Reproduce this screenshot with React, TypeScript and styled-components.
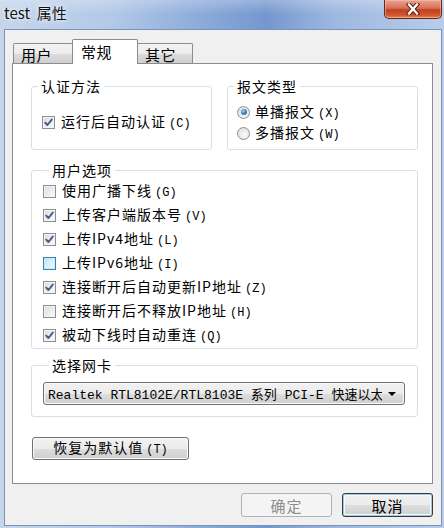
import { ReactElement, ReactNode } from 'react';

import styled, { createGlobalStyle, css } from 'styled-components';

const GlobalStyle = createGlobalStyle`
  html, body {
    margin: 0;
    padding: 0;
  }

  body {
    width: 444px;
    height: 528px;
    overflow: hidden;
    background: #b7cde9;
    font-family: "Noto Sans CJK SC", "Liberation Sans", sans-serif;
    color: #000;
  }

  * {
    box-sizing: border-box;
  }
`;

interface IOption {
  label: string;
  hotkey: string;
  checked?: boolean;
  hover?: boolean;
}

const userOptions: IOption[] = [
  { label: '使用广播下线', hotkey: 'G' },
  { label: '上传客户端版本号', hotkey: 'V', checked: true },
  { label: '上传IPv4地址', hotkey: 'L', checked: true },
  { label: '上传IPv6地址', hotkey: 'I', hover: true },
  { label: '连接断开后自动更新IP地址', hotkey: 'Z', checked: true },
  { label: '连接断开后不释放IP地址', hotkey: 'H' },
  { label: '被动下线时自动重连', hotkey: 'Q', checked: true },
];

function CheckBox({ checked, hover }: { checked?: boolean; hover?: boolean }): ReactElement {
  return (
    <Box $hover={hover}>
      {checked && (
        <svg width="11" height="11" viewBox="0 0 11 11">
          <path
            d="M2.2 5.6 L4.4 8 L8.8 2.6"
            fill="none"
            stroke="#41598f"
            strokeWidth="1.9"
            strokeLinecap="round"
            strokeLinejoin="round"
          />
        </svg>
      )}
    </Box>
  );
}

function Label({ text, hotkey }: { text: string; hotkey: string }): ReactElement {
  return (
    <LabelText>
      {text}
      <Hotkey>({hotkey})</Hotkey>
    </LabelText>
  );
}

function Check({ option }: { option: IOption }): ReactElement {
  return (
    <OptionRow>
      <CheckBox checked={option.checked} hover={option.hover} />
      <Label text={option.label} hotkey={option.hotkey} />
    </OptionRow>
  );
}

function Radio({ selected, children }: { selected?: boolean; children: ReactNode }): ReactElement {
  return (
    <RadioRow>
      <RadioCircle>{selected && <RadioDot />}</RadioCircle>
      {children}
    </RadioRow>
  );
}

function CloseGlyph(): ReactElement {
  return (
    <svg width="16" height="12" viewBox="0 0 16 12">
      <path
        d="M4 1.5 L12 10.5 M12 1.5 L4 10.5"
        stroke="#5a1a12"
        strokeWidth="4.4"
        strokeLinecap="square"
      />
      <path
        d="M4 1.5 L12 10.5 M12 1.5 L4 10.5"
        stroke="#ffffff"
        strokeWidth="2.4"
        strokeLinecap="square"
      />
    </svg>
  );
}

export default function App(): ReactElement {
  return (
    <>
      <GlobalStyle />
      <Window>
        <TitleBar>
          <Title>test&nbsp;&nbsp;属性</Title>
          <CloseButton>
            <CloseGlyph />
          </CloseButton>
        </TitleBar>
        <Client>
          <TabStrip>
            <Tab $width={60}>用户</Tab>
            <Tab $width={66} $active>
              常规
            </Tab>
            <Tab $width={56}>其它</Tab>
          </TabStrip>
          <Panel>
            <TopRow>
              <Group>
                <Legend>认证方法</Legend>
                <AuthBody>
                  <Check option={{ label: '运行后自动认证', hotkey: 'C', checked: true }} />
                </AuthBody>
              </Group>
              <Group>
                <Legend>报文类型</Legend>
                <RadioBody>
                  <Radio selected>
                    <Label text="单播报文" hotkey="X" />
                  </Radio>
                  <Radio>
                    <Label text="多播报文" hotkey="W" />
                  </Radio>
                </RadioBody>
              </Group>
            </TopRow>
            <OptionsGroup>
              <Legend>用户选项</Legend>
              <OptionList>
                {userOptions.map((o) => (
                  <Check key={o.label} option={o} />
                ))}
              </OptionList>
            </OptionsGroup>
            <AdapterGroup>
              <Legend>选择网卡</Legend>
              <Select>
                <SelectText>Realtek RTL8102E/RTL8103E 系列 PCI-E 快速以太网</SelectText>
                <Arrow />
              </Select>
            </AdapterGroup>
            <ResetButton>
              <Label text="恢复为默认值" hotkey="T" />
            </ResetButton>
          </Panel>
          <Footer>
            <DialogButton disabled>确定</DialogButton>
            <DialogButton $default>取消</DialogButton>
          </Footer>
        </Client>
      </Window>
    </>
  );
}

const Window = styled.div`
  width: 444px;
  height: 528px;
  display: flex;
  flex-direction: column;
  padding: 0 2px 2px 4px;
  background:
    linear-gradient(180deg, rgba(255, 255, 255, 0.25) 0px, rgba(255, 255, 255, 0) 14px),
    linear-gradient(
      90deg,
      #c4d6ec 0%,
      #b3c9e7 25%,
      #87a7d8 48%,
      #7597cf 60%,
      #9db7e0 75%,
      #b9cdea 100%
    );
`;

const TitleBar = styled.div`
  height: 29px;
  display: flex;
  align-items: flex-start;
`;

const Title = styled.div`
  margin-top: 3px;
  font-size: 15px;
  line-height: 20px;
  color: #111;
  text-shadow: 0 0 6px rgba(255, 255, 255, 0.9), 0 0 2px rgba(255, 255, 255, 0.9);
`;

const CloseButton = styled.div`
  margin-left: auto;
  width: 58px;
  height: 19px;
  display: flex;
  align-items: center;
  justify-content: center;
  border: 1px solid #6b2419;
  border-top: none;
  border-radius: 0 0 5px 5px;
  background: linear-gradient(180deg, #e8a491 0%, #d7705a 45%, #c2401f 55%, #d0582f 85%, #e58b5c 100%);
  box-shadow: inset 0 0 0 1px rgba(255, 200, 180, 0.5);
`;

const Client = styled.div`
  flex: 1;
  display: flex;
  flex-direction: column;
  padding: 9px 8px 0 7px;
  background: #f0f0f0;
  border: 1px solid #7b93b8;
`;

const TabStrip = styled.div`
  position: relative;
  z-index: 1;
  height: 25px;
  margin-bottom: -1px;
  padding-left: 1px;
  display: flex;
  align-items: flex-start;
`;

const Tab = styled.div<{ $width: number; $active?: boolean }>`
  width: ${(p) => p.$width}px;
  margin-top: 4px;
  height: 20px;
  padding: 2px 0 0 7px;
  display: flex;
  align-items: center;
  font-size: 15px;
  letter-spacing: 0.5px;
  border: 1px solid #898c95;
  border-bottom: none;
  border-radius: 2px 2px 0 0;
  background: linear-gradient(180deg, #f3f3f3 0%, #ebebeb 50%, #dddddd 51%, #cfcfcf 100%);

  & + & {
    margin-left: -1px;
  }

  ${(p) =>
    p.$active &&
    css`
      position: relative;
      z-index: 2;
      margin-top: 0;
      height: 25px;
      padding: 0 0 2px 8px;
      background: #ffffff;
    `}
`;

const Panel = styled.div`
  height: 421px;
  display: flex;
  flex-direction: column;
  align-items: flex-start;
  padding: 13px 14px 0 18px;
  background: #ffffff;
  border: 1px solid #898c95;
`;

const TopRow = styled.div`
  display: grid;
  grid-template-columns: 181px 191px;
  column-gap: 15px;
  align-items: stretch;
`;

const Group = styled.fieldset`
  margin: 0;
  padding: 0;
  min-width: 0;
  border: 1px solid #d5dfe5;
  border-radius: 3px;
`;

const OptionsGroup = styled(Group)`
  width: 387px;
  margin-top: 11px;
  padding: 0 0 1px 11px;
`;

const AdapterGroup = styled(Group)`
  width: 387px;
  margin-top: 7px;
  padding: 8px 12px 11px 11px;
`;

const Legend = styled.legend`
  margin-left: 6px;
  padding: 0 3px;
  font-size: 14px;
  line-height: 18px;
  letter-spacing: 1px;
`;

const AuthBody = styled.div`
  padding: 17px 0 0 10px;
`;

const RadioBody = styled.div`
  padding: 7px 0 6px 9px;
  display: flex;
  flex-direction: column;
  gap: 1px;
`;

const OptionList = styled.div`
  display: flex;
  flex-direction: column;
`;

const OptionRow = styled.div`
  height: 24px;
  display: flex;
  align-items: center;
  gap: 6px;
  white-space: nowrap;

  ${AuthBody} & {
    height: 20px;
  }
`;

const RadioRow = styled.div`
  height: 20px;
  display: flex;
  align-items: center;
  gap: 5px;
  white-space: nowrap;
`;

const LabelText = styled.span`
  font-size: 14px;
  line-height: 18px;
  letter-spacing: 1px;
`;

const Hotkey = styled.span`
  margin-left: 3px;
  font-family: "Liberation Mono", "Noto Sans CJK SC", monospace;
  font-size: 12px;
  letter-spacing: 0;
`;

const Box = styled.span<{ $hover?: boolean }>`
  flex: none;
  width: 13px;
  height: 13px;
  display: flex;
  align-items: center;
  justify-content: center;
  border: 1px solid ${(p) => (p.$hover ? '#3c7fb1' : '#8e8f8f')};
  background: ${(p) =>
    p.$hover
      ? 'linear-gradient(135deg, #b9e3f8 0%, #def3fc 60%, #f0faff 100%)'
      : 'linear-gradient(135deg, #dcdcdc 0%, #eeeeee 60%, #fafafa 100%)'};
  box-shadow: inset 0 0 0 1px ${(p) => (p.$hover ? '#c6ebfb' : '#f4f4f4')};
`;

const RadioCircle = styled.span`
  flex: none;
  width: 13px;
  height: 13px;
  display: flex;
  align-items: center;
  justify-content: center;
  border: 1px solid #8e8f8f;
  border-radius: 50%;
  background: radial-gradient(circle at 60% 60%, #fbfbfb 0%, #e6e6e6 60%, #d2d2d2 100%);
`;

const RadioDot = styled.span`
  width: 6px;
  height: 6px;
  border-radius: 50%;
  background: radial-gradient(circle at 40% 35%, #a7d2f4 0%, #3a86c6 45%, #17497f 100%);
`;

const Select = styled.div`
  width: 362px;
  height: 23px;
  display: flex;
  align-items: center;
  padding: 0 8px 0 4px;
  border: 1px solid #707070;
  border-radius: 3px;
  background: linear-gradient(180deg, #f2f2f2 0%, #ebebeb 50%, #dddddd 51%, #cfcfcf 100%);
  box-shadow: inset 0 0 0 1px #fafafa;
`;

const SelectText = styled.span`
  flex: 1;
  overflow: hidden;
  white-space: nowrap;
  font-family: "Liberation Mono", "Noto Sans CJK SC", monospace;
  font-size: 13px;
  letter-spacing: 0;
`;

const Arrow = styled.span`
  flex: none;
  margin-left: 6px;
  width: 0;
  height: 0;
  border-left: 4px solid transparent;
  border-right: 4px solid transparent;
  border-top: 4px solid #000;
`;

const buttonFace = css`
  height: 24px;
  display: flex;
  align-items: center;
  justify-content: center;
  border: 1px solid #707070;
  border-radius: 3px;
  background: linear-gradient(180deg, #f2f2f2 0%, #ebebeb 50%, #dddddd 51%, #cfcfcf 100%);
  box-shadow: inset 0 0 0 1px #fbfbfb;
  font-family: "Noto Sans CJK SC", "Liberation Sans", sans-serif;
  color: #000;
  padding: 0;
`;

const ResetButton = styled.button`
  ${buttonFace};
  width: 157px;
  height: 23px;
  margin: 20px 0 0 1px;
`;

const Footer = styled.div`
  margin-top: 9px;
  display: flex;
  justify-content: flex-end;
  gap: 10px;
`;

const DialogButton = styled.button<{ $default?: boolean }>`
  ${buttonFace};
  width: 91px;
  font-size: 15px;
  letter-spacing: 1px;

  &:disabled {
    border-color: #adb2b5;
    background: #f4f4f4;
    box-shadow: none;
    color: #8d8d8d;
  }

  ${(p) =>
    p.$default &&
    css`
      border-color: #3b3b3b;
      box-shadow: inset 0 0 0 1px #9ec9e6, inset 0 0 0 2px #f4f9fc;
    `}
`;
